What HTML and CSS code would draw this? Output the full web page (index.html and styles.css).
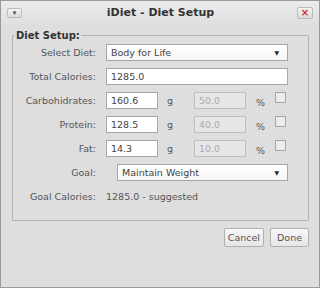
FILE: index.html
```html
<!DOCTYPE html>
<html lang="en">
<head>
    <meta charset="UTF-8">
    <title>iDiet - Diet Setup</title>
    <link rel="stylesheet" href="styles.css">
</head>
<body>
    <div class="window">
        <div class="titlebar">
            <span class="tb-btn menu-btn">&#9662;</span>
            <span class="title">iDiet - Diet Setup</span>
            <span class="tb-btn close-btn">&#215;</span>
        </div>
        <div class="content">
            <fieldset class="group">
                <legend>Diet Setup:</legend>
                <div class="row">
                    <label class="lbl">Select Diet:</label>
                    <div class="combo wide">Body for Life<span class="arrow">&#9660;</span></div>
                </div>
                <div class="row">
                    <label class="lbl">Total Calories:</label>
                    <div class="field wide">1285.0</div>
                </div>
                <div class="row">
                    <label class="lbl">Carbohidrates:</label>
                    <div class="field small">160.6</div>
                    <span class="unit">g</span>
                    <div class="field small disabled">50.0</div>
                    <span class="unit pct">%</span>
                    <span class="check"></span>
                </div>
                <div class="row">
                    <label class="lbl">Protein:</label>
                    <div class="field small">128.5</div>
                    <span class="unit">g</span>
                    <div class="field small disabled">40.0</div>
                    <span class="unit pct">%</span>
                    <span class="check"></span>
                </div>
                <div class="row">
                    <label class="lbl">Fat:</label>
                    <div class="field small">14.3</div>
                    <span class="unit">g</span>
                    <div class="field small disabled">10.0</div>
                    <span class="unit pct">%</span>
                    <span class="check"></span>
                </div>
                <div class="row">
                    <label class="lbl">Goal:</label>
                    <div class="combo goal">Maintain Weight<span class="arrow">&#9660;</span></div>
                </div>
                <div class="row">
                    <label class="lbl">Goal Calories:</label>
                    <span class="value">1285.0 - suggested</span>
                </div>
            </fieldset>
            <div class="buttons">
                <button class="btn">Cancel</button>
                <button class="btn">Done</button>
            </div>
        </div>
    </div>
</body>
</html>
```

FILE: styles.css
```css
*{
    margin: 0;
    padding: 0;
    box-sizing: border-box;
}
body {
    font-family: "DejaVu Sans", sans-serif;
    font-size: 9.5px;
    color: #555;
    background: #dedede;
    width: 320px;
    height: 288px;
    overflow: hidden;
}
.window {
    width: 320px;
    height: 288px;
    border: 1px solid #9a9a9a;
    background: #dedede;
    display: flex;
    flex-direction: column;
}
.titlebar {
    height: 23px;
    background: linear-gradient(#ececec, #e0e0e0);
    display: flex;
    align-items: center;
    justify-content: space-between;
    padding: 0 6px;
}
.title {
    font-weight: bold;
    font-size: 11px;
    color: #333;
    margin-left: 2px;
}
.tb-btn {
    width: 15px;
    height: 10px;
    border: 1px solid #bbb;
    border-radius: 2px;
    background: linear-gradient(#f4f4f4, #dadada);
    font-size: 7px;
    line-height: 8px;
    text-align: center;
    color: #444;
}
.close-btn {
    height: 12px;
    width: 16px;
    color: #c33;
    font-size: 10px;
    line-height: 10px;
    font-weight: bold;
}
.content {
    flex: 1;
    padding: 6px 10px 0 11px;
}
.group {
    border: 1px solid #b4b4b4;
    border-radius: 1px;
    padding: 3px 0 14px 0;
    height: 191px;
}
.group legend {
    font-weight: bold;
    font-size: 10px;
    color: #333;
    margin-left: 2px;
    padding: 0 1px;
}
.row {
    display: flex;
    align-items: center;
    height: 17px;
    margin-bottom: 7px;
}
.lbl {
    width: 83px;
    text-align: right;
    margin-right: 10px;
}
.field, .combo {
    height: 17px;
    background: #fff;
    border: 1px solid #a8a8a8;
    padding: 0 4px;
    line-height: 15px;
    color: #444;
}
.wide {
    width: 182px;
}
.combo {
    position: relative;
    background: linear-gradient(#fff, #f6f6f6);
}
.arrow {
    position: absolute;
    right: 8px;
    top: 0;
    font-size: 6px;
    color: #222;
}
.goal {
    width: 171px;
    margin-left: 11px;
}
.small {
    width: 52px;
}
.disabled {
    background: #e6e6e6;
    border-color: #bdbdbd;
    color: #aaa;
}
.unit {
    width: 36px;
    text-align: center;
    padding-right: 12px;
}
.pct {
    width: 29px;
    text-align: center;
    padding-right: 0;
    margin-top: 4px;
}
.check {
    width: 11px;
    height: 11px;
    border: 1px solid #a8a8a8;
    background: #ececec;
    align-self: flex-start;
    margin-top: 0;
}
.value {
    color: #555;
}
.buttons {
    display: flex;
    justify-content: flex-end;
    gap: 6px;
    margin-top: 7px;
    padding-right: 0;
}
.btn {
    font-family: "DejaVu Sans", sans-serif;
    font-size: 9.5px;
    color: #555;
    height: 19px;
    min-width: 39px;
    padding: 0 3px;
    border: 1px solid #b0b0b0;
    border-radius: 2px;
    background: linear-gradient(#f8f8f8, #e6e6e6);
}
```
